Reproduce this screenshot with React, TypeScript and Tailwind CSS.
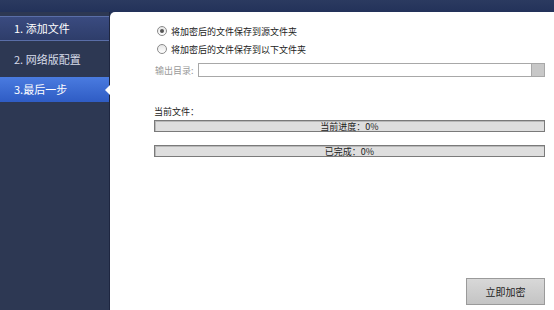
import React from 'react';

const font = { fontFamily: '"Noto Sans CJK SC", "Liberation Sans", sans-serif' };

const Radio = ({ checked, label }: { checked?: boolean; label: string }) => (
  <div className="flex items-center h-[18px]">
    <span className="w-[10px] h-[10px] rounded-full border border-[#8a8a8a] bg-gradient-to-b from-[#e6e6e6] to-white flex items-center justify-center">
      {checked && <span className="w-[4px] h-[4px] rounded-full bg-[#555]" />}
    </span>
    <span className="ml-[4px] text-[9px] text-[#222] leading-none">{label}</span>
  </div>
);

const Bar = ({ text }: { text: string }) => (
  <div className="h-[12px] border border-[#7a7a7a] bg-[#dedede] shadow-[inset_1px_1px_0_#b8b8b8] flex items-center justify-center">
    <span className="text-[9px] leading-none text-[#222]">{text}</span>
  </div>
);

export default function App() {
  return (
    <div className="w-[554px] h-[310px] flex flex-col bg-[#26355a] overflow-hidden" style={font}>
      {/* top strip */}
      <div className="h-[12px] bg-gradient-to-b from-[#2b3a60] to-[#23325a]" />
      <div className="flex flex-1 min-h-0">
        {/* nav */}
        <div className="w-[110px] bg-[#2d3853] border-r border-[#1e2640] flex flex-col pt-[4px]">
          <div className="h-[25px] flex items-center pl-[14px] text-[11px] text-white bg-gradient-to-b from-[#3a4b80] to-[#2e3d6a] border-y border-[#5a6ea8]">
            1. 添加文件
          </div>
          <div className="h-[36px] flex items-center pl-[14px] text-[11px] text-[#d8dcea]">
            2. 网络版配置
          </div>
          <div className="relative h-[25px] flex items-center pl-[14px] text-[11px] text-white bg-gradient-to-b from-[#4a7be0] to-[#2f5cc4]">
            3.最后一步
            <span className="absolute right-[-1px] top-[8px] w-0 h-0 border-y-[5px] border-y-transparent border-r-[5px] border-r-white" />
          </div>
        </div>
        {/* content */}
        <div className="flex-1 bg-white rounded-tl-[5px] flex flex-col pl-[44px] pr-[9px]">
          <div className="mt-[10px] pl-[3px]">
            <Radio checked label="将加密后的文件保存到源文件夹" />
            <Radio label="将加密后的文件保存到以下文件夹" />
          </div>
          <div className="mt-[5px] flex items-center h-[14px]">
            <span className="w-[44px] pl-[1px] text-[9px] text-[#9a9a9a] leading-none">输出目录:</span>
            <div className="flex-1 h-[14px] border border-[#a8a8a8] flex justify-end">
              <div className="w-[13px] h-full bg-[#c8c8c8] border-l border-[#aaa]" />
            </div>
          </div>
          <div className="mt-[30px] text-[9px] leading-none text-[#222]">当前文件：</div>
          <div className="mt-[4px]">
            <Bar text="当前进度：0%" />
          </div>
          <div className="mt-[13px]">
            <Bar text="已完成：0%" />
          </div>
          <div className="flex-1" />
          <div className="flex justify-end mb-[5px]">
            <button className="w-[79px] h-[27px] border border-[#9a9a9a] bg-gradient-to-b from-[#d8d8d8] to-[#c4c4c4] text-[10px] text-[#222]">
              立即加密
            </button>
          </div>
        </div>
      </div>
    </div>
  );
}
